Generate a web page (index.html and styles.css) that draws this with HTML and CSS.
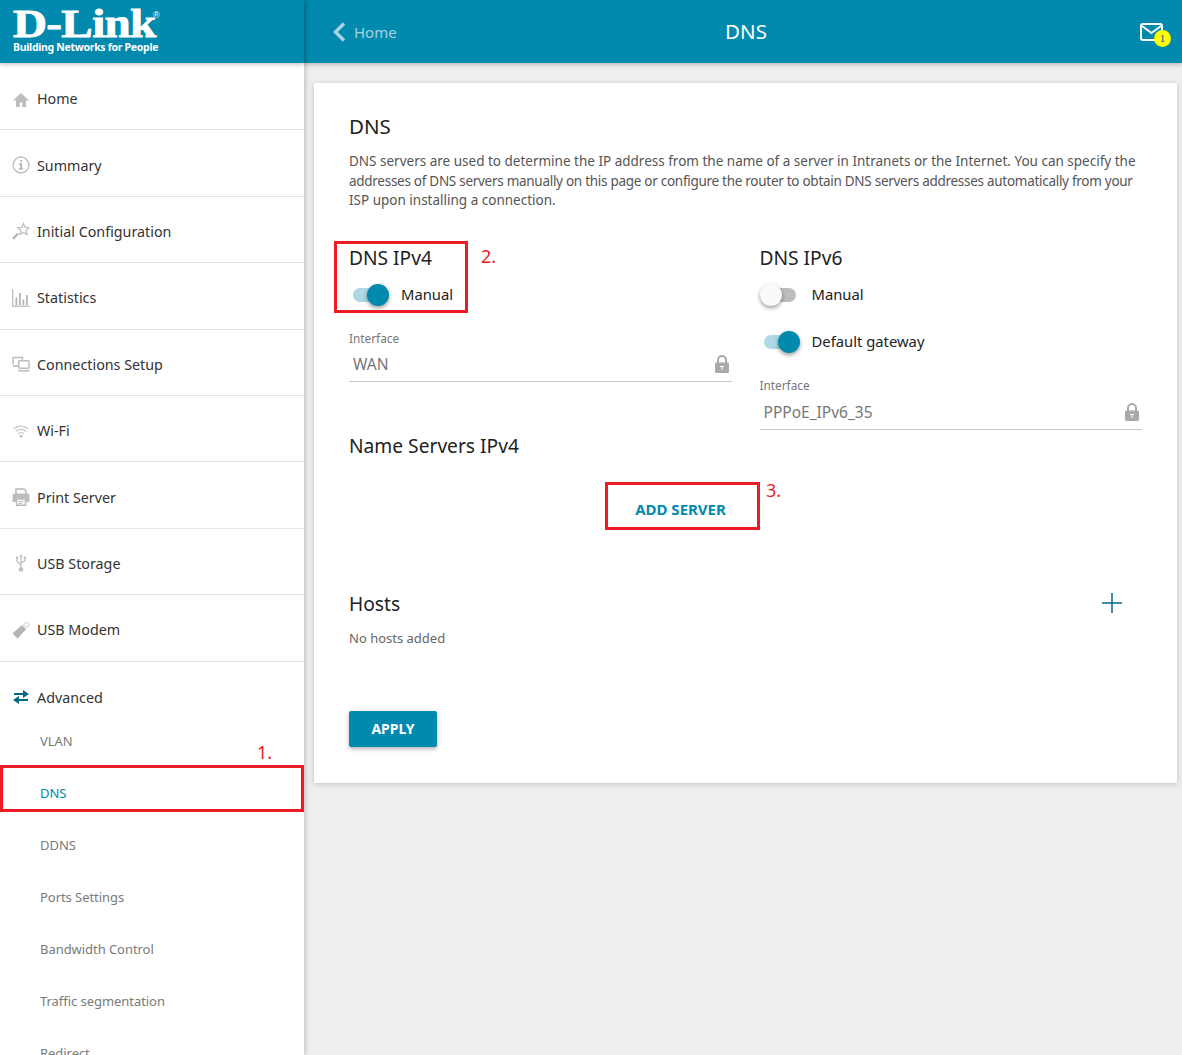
FILE: index.html
```html
<!DOCTYPE html>
<html lang="en">
<head>
<meta charset="utf-8">
<title>DNS</title>
<link rel="stylesheet" href="styles.css">
</head>
<body>
<div class="app">
  <aside class="sidebar">
    <div class="logo">
      <div class="logo-main"><span class="logo-word">D-Link</span><sup class="logo-r">®</sup></div>
      <div class="logo-tag">Building Networks for People</div>
    </div>
    <nav class="menu">
      <div class="item"><svg class="ic" viewBox="0 0 18 18"><path d="M9 3 1 10.500h3V17h3.800v-4.500h2.400V17H14v-6.500h3z" fill="#bdbdbd"/></svg><span>Home</span></div>
      <div class="item"><svg class="ic" viewBox="0 0 18 18"><circle cx="9" cy="9" r="7.900" fill="none" stroke="#c0c0c0" stroke-width="1.500"/><path d="M8.300 4h1.800v1.800H8.300zM6.900 7.300h3.100v5h1.200v1.200H6.900v-1.200h1.300V8.500H6.900z" fill="#b0b0b0"/></svg><span>Summary</span></div>
      <div class="item"><svg class="ic" viewBox="0 0 18 18"><path d="M11.500 1.500l1.600 3.800 4 .4-3 2.700.9 4-3.500-2-3.500 2 .9-4-3-2.700 4-.4z" fill="none" stroke="#c0c0c0" stroke-width="1.300"/><path d="M6 11.500 1 17" stroke="#b5b5b5" stroke-width="2.200"/></svg><span>Initial Configuration</span></div>
      <div class="item"><svg class="ic" viewBox="0 0 18 18"><path d="M.7 0v17.300H18" fill="none" stroke="#c4c4c4" stroke-width="1.400"/><path d="M3.500 8.500h1.800V16H3.500zM7 4h1.800v12H7zM10.500 10.500h1.800V16h-1.800zM14 6h1.800v10H14z" fill="#b5b5b5"/></svg><span>Statistics</span></div>
      <div class="item"><svg class="ic" viewBox="0 0 18 18"><path d="M1 9.500V2.500h9.500v2.300M1 11h5" fill="none" stroke="#bbb" stroke-width="1.400"/><rect x="6.700" y="5.700" width="10.300" height="7.600" rx="1" fill="none" stroke="#bbb" stroke-width="1.400"/><path d="M6 15.800h11.700" stroke="#bbb" stroke-width="1.500"/></svg><span>Connections Setup</span></div>
      <div class="item"><svg class="ic" viewBox="0 0 18 18"><path d="M1.500 7a11 11 0 0 1 15 0M3.800 9.500a7.600 7.600 0 0 1 10.400 0M6 11.800a4.300 4.300 0 0 1 6 0" fill="none" stroke="#cacaca" stroke-width="1.200"/><circle cx="9" cy="14.200" r="1.400" fill="#c0c0c0"/></svg><span>Wi-Fi</span></div>
      <div class="item"><svg class="ic" viewBox="0 0 18 18"><path d="M4 6V1h8l2 2v3" fill="none" stroke="#b8b8b8" stroke-width="1.500"/><path d="M2.500 5.500h13a2 2 0 0 1 2 2V14H14v-3.500H4V14H.5V7.500a2 2 0 0 1 2-2z" fill="#bdbdbd"/><path d="M4.500 11h9v6.200h-9z" fill="none" stroke="#b8b8b8" stroke-width="1.400"/><path d="M6.500 13.500h5M6.500 15.500h3.500" stroke="#b8b8b8"/></svg><span>Print Server</span></div>
      <div class="item"><svg class="ic" viewBox="0 0 18 18"><path d="M9 1v15M5 4v3.500L9 11M13 4v2.500L9 9" fill="none" stroke="#c0c0c0" stroke-width="1.400"/><circle cx="9" cy="15.500" r="2.300" fill="#c0c0c0"/><path d="M3.800 2.500h2.400v2.200H3.800zM11.800 2.500h2.400v2.200h-2.400z" fill="#c0c0c0"/><path d="M9 0l1.500 2.500h-3z" fill="#c0c0c0"/></svg><span>USB Storage</span></div>
      <div class="item"><svg class="ic" viewBox="0 0 18 18"><path d="M.500 12.500 10 4l4 4.500-8.500 9z" fill="#b5b5b5"/><path d="M11.500 4l3-3 3 3-3 3z" fill="none" stroke="#c4c4c4"/></svg><span>USB Modem</span></div>
      <div class="item"><svg class="ic" viewBox="0 0 18 18"><path d="M2 6h10M16 12H6" stroke="#00688b" stroke-width="2.200"/><path d="M11 2l6 4-6 4zM7 8l-6 4 6 4z" fill="#00688b"/></svg><span>Advanced</span></div>
      <div class="submenu">
        <div class="sub">VLAN</div>
        <div class="sub active">DNS</div>
        <div class="sub">DDNS</div>
        <div class="sub">Ports Settings</div>
        <div class="sub">Bandwidth Control</div>
        <div class="sub">Traffic segmentation</div>
        <div class="sub">Redirect</div>
      </div>
    </nav>
  </aside>
  <div class="content">
    <header class="topbar">
      <div class="back">
        <svg class="chev" viewBox="0 0 14 20"><path d="M12 1.500 3.500 10l8.500 8.500" fill="none" stroke="#a5d3e0" stroke-width="3.400"/></svg>
        <span>Home</span>
      </div>
      <div class="top-title">DNS</div>
      <div class="notify">
        <svg class="mail" viewBox="0 0 23 18"><rect x="1" y="1" width="21" height="16" rx="2" fill="none" stroke="#fff" stroke-width="2"/><path d="M2 3l9.500 7L21 3" fill="none" stroke="#fff" stroke-width="2"/></svg>
        <span class="badge">1</span>
      </div>
    </header>
    <main class="card">
      <h1 class="title">DNS</h1>
      <p class="desc">DNS servers are used to determine the IP address from the name of a server in Intranets or the Internet. You can specify the<br><span class="tight">addresses of DNS servers manually on this page or configure the router to obtain DNS servers addresses automatically from your</span><br>ISP upon installing a connection.</p>
      <div class="cols">
        <section class="col">
          <h2 class="head">DNS IPv4</h2>
          <div class="toggle-row"><span class="toggle on"><i></i></span><span class="t-label">Manual</span></div>
          <div class="field">
            <div class="f-label">Interface</div>
            <div class="f-value"><span>WAN</span><svg class="lock" viewBox="0 0 14 18"><path d="M3 8V5a4 4 0 0 1 8 0v3" fill="none" stroke="#a9a9a9" stroke-width="2"/><rect y="7.500" width="14" height="10.500" rx="1.500" fill="#a9a9a9"/><path d="M5 11h4v1H7.500v3h-1v-3H5z" fill="#fff"/></svg></div>
          </div>
          <h2 class="head ns">Name Servers IPv4</h2>
        </section>
        <section class="col">
          <h2 class="head">DNS IPv6</h2>
          <div class="toggle-row"><span class="toggle off"><i></i></span><span class="t-label">Manual</span></div>
          <div class="toggle-row second"><span class="toggle on"><i></i></span><span class="t-label">Default gateway</span></div>
          <div class="field f6">
            <div class="f-label">Interface</div>
            <div class="f-value"><span>PPPoE_IPv6_35</span><svg class="lock" viewBox="0 0 14 18"><path d="M3 8V5a4 4 0 0 1 8 0v3" fill="none" stroke="#a9a9a9" stroke-width="2"/><rect y="7.500" width="14" height="10.500" rx="1.500" fill="#a9a9a9"/><path d="M5 11h4v1H7.500v3h-1v-3H5z" fill="#fff"/></svg></div>
          </div>
        </section>
      </div>
      <div class="add-wrap"><button class="add">ADD SERVER</button></div>
      <div class="hosts-head">
        <h2 class="head">Hosts</h2>
        <svg class="plus" viewBox="0 0 20 20"><path d="M10 0v20M0 10h20" stroke="#00688b" stroke-width="1.500"/></svg>
      </div>
      <p class="empty">No hosts added</p>
      <button class="apply">APPLY</button>
    </main>
  </div>
  <div class="mark m1"></div><span class="num n1">1.</span>
  <div class="mark m2"></div><span class="num n2">2.</span>
  <div class="mark m3"></div><span class="num n3">3.</span>
</div>
</body>
</html>
```
FILE: styles.css
```css
* { box-sizing: border-box; }
html, body { margin: 0; height: 100%; overflow: hidden; }
body { font-family: "Noto Sans", sans-serif; color: #333; background: #eee; }
.app { position: relative; display: flex; height: 1055px; overflow: hidden; }
.sidebar { width: 304px; flex: none; background: #fff; box-shadow: 1px 0 5px rgba(0,0,0,.22); position: relative; z-index: 2; }
.logo { height: 63px; background: #0289ae; color: #fff; padding: 6px 0 0 13px; box-shadow: 0 2px 4px rgba(0,0,0,.2); position: relative; }
.logo-main { font: 700 41px/34px "Liberation Serif", serif; position: relative; height: 35px; }
.logo-word { display: inline-block; transform: scaleX(1.15); transform-origin: left center; -webkit-text-stroke: .8px #fff; letter-spacing: -.6px; }
.logo-r { position: absolute; left: 140px; top: 5px; font: 400 9px/9px "Liberation Sans", sans-serif; }
.logo-tag { font: 700 10.500px/12px "Noto Sans", sans-serif; letter-spacing: -.3px; white-space: nowrap; }
.menu { padding-top: 1px; }
.item { height: 66.400px; border-bottom: 1px solid #e4e4e4; display: flex; align-items: center; padding: 4px 0 0 12px; font-size: 14.300px; color: #333; }
.item:nth-child(10) { border-bottom: 0; height: 53px; padding-top: 18.600px; }
.ic { width: 18px; height: 18px; margin-right: 7px; flex: none; }
.sub { height: 52px; display: flex; align-items: center; padding-left: 40px; font-size: 13px; letter-spacing: -.05px; color: #7a7a7a; }
.sub.active { color: #0289ae; }
.content { flex: 1; min-width: 0; }
.topbar { height: 63px; background: #0289ae; box-shadow: 0 2px 4px rgba(0,0,0,.2); display: grid; grid-template-columns: 1fr auto 1fr; align-items: center; padding: 0 22px 0 28px; color: #fff; }
.back { display: flex; align-items: center; gap: 8px; color: #a5d3e0; font-size: 15px; }
.chev { width: 14px; height: 20px; }
.top-title { font-size: 20.500px; padding-bottom: 2px; }
.notify { justify-self: end; position: relative; width: 32px; height: 24px; margin-right: -12px; }
.mail { width: 23px; height: 18px; display: block; margin-top: 3px; }
.badge { position: absolute; left: 14px; top: 10px; width: 17px; height: 17px; border-radius: 50%; background: #ffff00; color: #0a4f9e; font: 11px/17px "Liberation Serif", serif; text-align: center; }
.card { background: #fff; margin: 20px 5px 0 10px; height: 700px; padding: 28px 35px 0; box-shadow: 0 1px 5px rgba(0,0,0,.2); }
.title { font-size: 20.500px; font-weight: 400; line-height: 30px; margin: 0 0 11px; color: #222; }
.desc { font-size: 13.500px; line-height: 19.500px; margin: 0; color: #555; white-space: nowrap; }
.tight { letter-spacing: -.28px; }
.cols { display: grid; grid-template-columns: 1fr 1fr; gap: 28px; margin-top: 32px; }
.head { font-size: 19.200px; font-weight: 400; line-height: 30px; margin: 0; color: #222; }
.toggle-row { display: flex; align-items: center; height: 24px; margin-top: 10px; font-size: 14.800px; color: #222; }
.toggle-row.second { margin-top: 23px; }
.t-label { margin-top: -2px; }
.toggle { position: relative; width: 32px; height: 14px; border-radius: 7px; margin: 0 16px 0 4px; flex: none; }
.toggle i { position: absolute; top: -4px; width: 22px; height: 22px; border-radius: 50%; box-shadow: 0 2px 4px rgba(0,0,0,.4); }
.toggle.on { background: #aed8e4; }
.toggle.on i { right: -4px; background: #0289ae; }
.toggle.off { background: #bdbdbd; }
.toggle.off i { left: -4px; background: #fafafa; }
.field { margin-top: 22px; }
.f-label { font-size: 11.800px; line-height: 18px; color: #777; }
.f-value { display: flex; justify-content: space-between; align-items: center; height: 35px; padding: 0 4px; border-bottom: 1px solid #c8c8c8; font-size: 15.500px; color: #777; }
.f6 .f-value { height: 36px; padding-top: 1px; }
.lock { width: 14px; height: 18px; margin-right: -1px; }
.ns { margin-top: 49px; }
.add-wrap { margin: 21px 0 0 256px; }
.add { display: block; width: 154px; height: 48px; border: 0; background: none; padding: 6px 3px 0 0; font: 700 15px "Noto Sans", sans-serif; color: #0289ae; }
.hosts-head { display: flex; justify-content: space-between; align-items: center; margin-top: 59px; padding-right: 20px; }
.plus { width: 20px; height: 20px; margin-top: -2px; }
.empty { font-size: 13px; line-height: 20px; margin: 9px 0 0; color: #666; }
.apply { display: block; width: 88px; height: 36px; margin-top: 63px; border: 0; border-radius: 2px; background: #0289ae; color: #fff; font: 700 14px "Noto Sans", sans-serif; box-shadow: 0 2px 4px rgba(0,0,0,.3); }
.mark { position: absolute; border: 3px solid #ed1c24; z-index: 5; }
.m1 { left: 0; top: 765px; width: 304px; height: 47px; }
.m2 { left: 334px; top: 241px; width: 134px; height: 72px; }
.m3 { left: 605px; top: 482px; width: 155px; height: 48px; }
.num { position: absolute; z-index: 5; color: #ed1c24; font-size: 18px; line-height: 20px; }
.n1 { left: 257px; top: 742px; }
.n2 { left: 481px; top: 246px; }
.n3 { left: 766px; top: 480px; }
```
